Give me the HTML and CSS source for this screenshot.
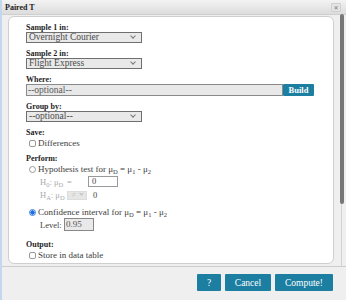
FILE: index.html
```html
<!DOCTYPE html>
<html>
<head>
<meta charset="utf-8">
<link rel="stylesheet" href="styles.css">
</head>
<body>
<div class="window">
  <div class="titlebar">
    <span class="title">Paired T</span>
    <span class="close">✕</span>
  </div>
  <div class="main">
    <div class="panel">
      <div class="field">
        <div class="label">Sample 1 in:</div>
        <div class="select">Overnight Courier<span class="chev"></span></div>
      </div>
      <div class="field">
        <div class="label">Sample 2 in:</div>
        <div class="select">Flight Express<span class="chev"></span></div>
      </div>
      <div class="field">
        <div class="label">Where:</div>
        <div class="where-row">
          <div class="where-input">--optional--</div>
          <div class="btn build">Build</div>
        </div>
      </div>
      <div class="field">
        <div class="label">Group by:</div>
        <div class="select">--optional--<span class="chev"></span></div>
      </div>
      <div class="field">
        <div class="label">Save:</div>
        <div class="opt"><span class="box"></span><span class="txt">Differences</span></div>
      </div>
      <div class="field">
        <div class="label">Perform:</div>
        <div class="opt"><span class="radio"></span><span class="txt">Hypothesis test for μ<span class="sb">D</span> = μ<span class="sb">1</span> - μ<span class="sb">2</span></span></div>
        <div class="hrow h0"><span class="hlab">H<span class="sb">0</span>: μ<span class="sb">D</span></span><span class="eq">=</span><span class="numin">0</span></div>
        <div class="hrow ha"><span class="hlab">H<span class="sb">A</span>: μ<span class="sb">D</span></span><span class="minisel">≠<span class="chev small"></span></span><span class="zero">0</span></div>
        <div class="opt conf"><span class="radio on"></span><span class="txt">Confidence interval for μ<span class="sb">D</span> = μ<span class="sb">1</span> - μ<span class="sb">2</span></span></div>
        <div class="hrow level"><span class="lvl">Level:</span><span class="lvlin">0.95</span></div>
      </div>
      <div class="field out">
        <div class="label">Output:</div>
        <div class="opt"><span class="box"></span><span class="txt">Store in data table</span></div>
      </div>
    </div>
    <div class="scroll"><div class="thumb"></div></div>
  </div>
  <div class="footer">
    <div class="btn q">?</div>
    <div class="btn cancel">Cancel</div>
    <div class="btn compute">Compute!</div>
  </div>
</div>
</body>
</html>
```
FILE: styles.css
```css
html, body {
  margin: 0;
  padding: 0;
}
body {
  width: 346px;
  height: 300px;
  overflow: hidden;
  font-family: "Liberation Serif", "Times New Roman", serif;
  color: #333;
}
.window {
  box-sizing: border-box;
  width: 346px;
  height: 300px;
  background: #efefef;
  border-left: 2px solid #c3d7ee;
  display: flex;
  flex-direction: column;
}
.titlebar {
  height: 15px;
  box-sizing: border-box;
  border-bottom: 1px solid #cfcfcf;
  background: linear-gradient(#f3f3f3, #dcdcdc);
  display: flex;
  align-items: center;
  justify-content: space-between;
  padding: 0 5px 0 3px;
}
.title {
  font-weight: bold;
  font-size: 8px;
  color: #222;
}
.close {
  width: 10px;
  height: 9px;
  box-sizing: border-box;
  background: #e4e4e4;
  border: 1px solid #d0d0d0;
  border-radius: 1px;
  font-size: 6px;
  line-height: 7px;
  text-align: center;
  color: #777;
  font-family: "DejaVu Sans", sans-serif;
}
.main {
  height: 251px;
  display: flex;
  border-bottom: 1px solid #cdcdcd;
}
.panel {
  box-sizing: border-box;
  margin: 1px 0 0 6px;
  width: 326px;
  height: 248px;
  background: #fff;
  border: 1px solid #cfcfcf;
  border-radius: 6px;
  padding: 6px 0 0 17px;
}
.scroll {
  margin-left: 6px;
  width: 4px;
  display: flex;
  flex-direction: column;
  background: linear-gradient(to right, transparent 1px, #d2d2d2 1px, #d2d2d2 2px, transparent 2px);
}
.thumb {
  margin-top: -1px;
  height: 190px;
  background: #777;
  border-radius: 2px;
}
.field {
  margin-bottom: 6px;
}
.label {
  font-weight: bold;
  font-size: 8px;
  line-height: 9px;
  color: #1e1e1e;
}
.select {
  position: relative;
  box-sizing: border-box;
  width: 116px;
  height: 11px;
  background: #e9e9e9;
  border: 1px solid #6f6f6f;
  font-size: 9.5px;
  line-height: 9px;
  padding-left: 2px;
  color: #4a4a4a;
}
.chev {
  position: absolute;
  right: 6px;
  top: 1px;
  width: 3px;
  height: 3px;
  border-right: 1px solid #777;
  border-bottom: 1px solid #777;
  transform: rotate(45deg);
}
.where-row {
  display: flex;
  align-items: stretch;
  height: 12px;
}
.where-input {
  box-sizing: border-box;
  width: 257px;
  background: #e8e8e8;
  border: 1px solid #8a8a8a;
  font-size: 9.5px;
  line-height: 10px;
  padding-left: 1px;
  color: #5a5a5a;
}
.btn {
  background: #1c7ea1;
  color: #fff;
  font-size: 9.5px;
  display: flex;
  align-items: center;
  justify-content: center;
  border-radius: 1px;
}
.build {
  width: 31px;
  font-weight: bold;
  font-size: 8.5px;
}
.opt {
  display: flex;
  align-items: center;
  font-size: 9px;
  line-height: 10px;
  color: #3c3c3c;
  margin-top: 1px;
  margin-left: 3px;
}
.txt {
  white-space: pre;
}
.sb {
  font-size: 6.5px;
  vertical-align: -2px;
  line-height: 0;
}
.box {
  width: 7px;
  height: 7px;
  box-sizing: border-box;
  border: 1px solid #999;
  border-radius: 2px;
  margin-right: 2px;
  background: #fff;
}
.radio {
  width: 7px;
  height: 7px;
  box-sizing: border-box;
  border: 1px solid #999;
  border-radius: 50%;
  margin-right: 2px;
  background: #fff;
}
.radio.on {
  border: 1px solid #3a7fe0;
  background: radial-gradient(circle, #1a6fe0 55%, #c9dcf5 62%);
}
.hrow {
  display: flex;
  align-items: center;
  margin-left: 14px;
  font-size: 8.5px;
  color: #aaa;
}
.h0 {
  margin-top: 2px;
  height: 11px;
}
.hlab {
  width: 27px;
}
.eq {
  width: 21px;
}
.numin {
  box-sizing: border-box;
  width: 30px;
  height: 11px;
  border: 1px solid #999;
  color: #444;
  padding-left: 3px;
  line-height: 9px;
  font-size: 8.5px;
}
.ha {
  margin-top: 3px;
  height: 10px;
}
.minisel {
  position: relative;
  box-sizing: border-box;
  width: 20px;
  height: 9px;
  background: #e6e6e6;
  border: 1px solid #ddd;
  color: #bbb;
  font-size: 7px;
  line-height: 7px;
  padding-left: 4px;
}
.chev.small {
  right: 3px;
  top: 0;
  width: 2px;
  height: 2px;
  border-color: #bbb;
}
.zero {
  margin-left: 6px;
  color: #444;
}
.conf {
  margin-top: 7px;
}
.level {
  margin-top: 1px;
  height: 13px;
  color: #444;
}
.lvl {
  width: 24px;
}
.lvlin {
  box-sizing: border-box;
  width: 30px;
  height: 13px;
  background: #e9e9e9;
  border: 1px solid #888;
  color: #555;
  padding-left: 1px;
  line-height: 11px;
  font-size: 9px;
}
.out {
  margin-top: 9px;
}
.footer {
  flex: 1;
  display: flex;
  justify-content: flex-end;
  align-items: flex-start;
  gap: 4px;
  padding: 7px 13px 0 0;
}
.footer .btn {
  height: 17px;
}
.q { width: 24px; }
.cancel { width: 46px; }
.compute { width: 58px; }
```
